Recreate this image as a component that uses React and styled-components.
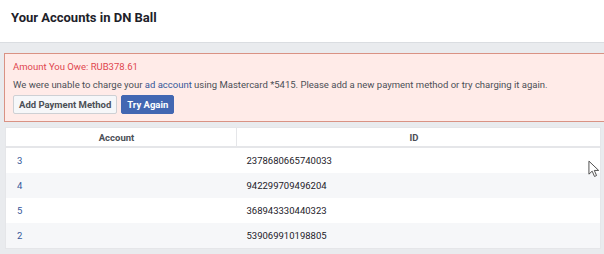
import React from "react";
import styled, { createGlobalStyle } from "styled-components";

const GlobalStyle = createGlobalStyle`
  html, body {
    margin: 0;
    padding: 0;
    background: #e9ebee;
    font-family: Roboto, "Liberation Sans", Arial, sans-serif;
    overflow: hidden;
  }
`;

const accounts = [
  { name: "3", id: "2378680665740033" },
  { name: "4", id: "942299709496204" },
  { name: "5", id: "368943330440323" },
  { name: "2", id: "539069910198805" },
];

const App = () => {
  return (
    <Page>
      <GlobalStyle />
      <Header>
        <Title>Your Accounts in DN Ball</Title>
      </Header>
      <Content>
        <Alert>
          <Owe>Amount You Owe: RUB378.61</Owe>
          <Message>
            We were unable to charge your <TextLink>ad account</TextLink> using
            Mastercard *5415. Please add a new payment method or try charging it again.
          </Message>
          <Buttons>
            <Button>Add Payment Method</Button>
            <Button primary>Try Again</Button>
          </Buttons>
        </Alert>
        <Table>
          <thead>
            <tr>
              <HeadCell style={{ width: 221 }}>Account</HeadCell>
              <HeadCell>ID</HeadCell>
            </tr>
          </thead>
          <tbody>
            {accounts.map((a, i) => (
              <Row key={a.id} striped={i % 2 === 1}>
                <Cell>
                  <TextLink>{a.name}</TextLink>
                </Cell>
                <Cell>{a.id}</Cell>
              </Row>
            ))}
          </tbody>
        </Table>
      </Content>
      <Cursor width="13" height="19" viewBox="0 0 14 20">
        <path
          d="M1 1 L1 15 L4.5 11.8 L7 17.5 L9.2 16.5 L6.8 11 L11.5 11 Z"
          fill="#fff"
          stroke="#444"
          strokeWidth="1"
          strokeLinejoin="round"
        />
      </Cursor>
    </Page>
  );
};

export default App;

const Page = styled.div`
  position: relative;
  width: 604px;
  height: 254px;
  background: #e9ebee;
`;

const Header = styled.div`
  height: 43px;
  box-sizing: border-box;
  background: #fff;
  border-bottom: 1px solid #dadde1;
  padding: 9px 0 0 11px;
`;

const Title = styled.div`
  font-size: 13px;
  font-weight: 700;
  color: #1d2129;
  line-height: 18px;
`;

const Content = styled.div`
  padding: 10px 0 0 4px;
`;

const Alert = styled.div`
  background: #ffebe8;
  border: 1px solid #d99284;
  border-right: none;
  padding: 6px 8px 7px 8px;
  font-size: 9.5px;
`;

const Owe = styled.div`
  color: #e0464f;
  line-height: 14px;
`;

const Message = styled.div`
  color: #4b4f56;
  line-height: 14px;
  margin-top: 4px;
  white-space: nowrap;
`;

const TextLink = styled.span`
  color: #365899;
`;

const Buttons = styled.div`
  display: flex;
  gap: 4px;
  margin-top: 3px;
`;

const Button = styled.button`
  font-family: inherit;
  font-size: 9.5px;
  font-weight: 700;
  height: 19px;
  padding: 0 5px;
  border-radius: 2px;
  border: 1px solid ${(p) => (p.primary ? "#4267b2" : "#ced0d4")};
  background: ${(p) => (p.primary ? "#4267b2" : "#f6f7f9")};
  color: ${(p) => (p.primary ? "#fff" : "#4b4f56")};
  line-height: 17px;
`;

const Table = styled.table`
  margin: 5px 3px 0 1px;
  width: 596px;
  border-collapse: collapse;
  background: #fff;
  font-size: 9.5px;
  border: 1px solid #e5e6e9;
`;

const HeadCell = styled.th`
  height: 18px;
  font-weight: 700;
  color: #4b4f56;
  text-align: center;
  border-right: 1px solid #e5e6e9;
  border-bottom: 2px solid #e5e6e9;
  padding: 0 9px 0 0;
`;

const Row = styled.tr`
  background: ${(p) => (p.striped ? "#f6f7f9" : "#fff")};
`;

const Cell = styled.td`
  height: 25px;
  padding: 0 10px;
  color: #1d2129;
  &:first-child {
    padding-left: 11px;
  }
`;

const Cursor = styled.svg`
  position: absolute;
  left: 588px;
  top: 160px;
`;
